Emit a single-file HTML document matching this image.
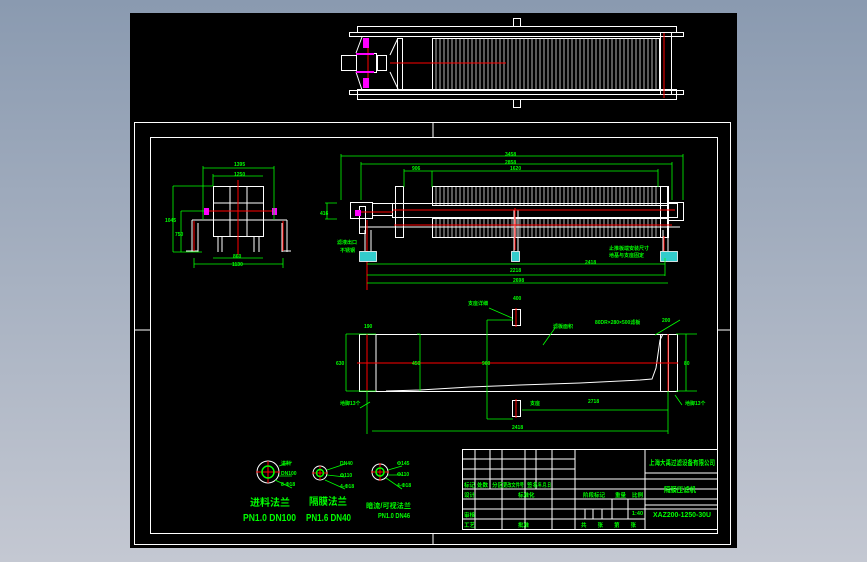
<!DOCTYPE html>
<html><head><meta charset="utf-8"><style>
html,body{margin:0;padding:0;width:867px;height:562px;overflow:hidden;background:linear-gradient(#8a9ab0,#c4c8d2);}
svg{position:absolute;left:0;top:0}
text{font-family:"Liberation Sans","Noto Sans CJK SC",sans-serif;fill:#00ff00;font-weight:bold}
</style></head><body>
<svg width="867" height="562" viewBox="0 0 867 562">
<rect x="130" y="13" width="607" height="535" fill="#000"/>
<g fill="none" stroke="#fff" stroke-width="1">
<rect x="134.5" y="122.5" width="596" height="422"/>
<rect x="150.5" y="137.5" width="567" height="396"/>
<line x1="433" y1="122" x2="433" y2="137"/><line x1="433" y1="533" x2="433" y2="545"/>
<line x1="134" y1="330" x2="150" y2="330"/><line x1="717" y1="330" x2="731" y2="330"/>
<rect x="357.5" y="26.5" width="319" height="6"/><rect x="357.5" y="89.5" width="319" height="10"/>
<rect x="349.5" y="32.5" width="334" height="4"/><rect x="349.5" y="90.5" width="334" height="4"/>
<rect x="432.5" y="38.5" width="227" height="51"/>
<rect x="397.5" y="38.5" width="5" height="51"/>
<rect x="660.5" y="32.5" width="11" height="62"/>
<rect x="341.5" y="55.5" width="15" height="15"/><rect x="356.5" y="53.5" width="20" height="19"/>
<rect x="377.5" y="55.5" width="9" height="15"/>
<path d="M362 37 L356 53 M362 90 L356 72 M398 38 L390 55 M398 89 L390 72"/>
<rect x="513.5" y="18.5" width="7" height="8"/><rect x="513.5" y="99.5" width="7" height="8"/>
<rect x="432.5" y="186.5" width="236" height="19"/><rect x="432.5" y="218.5" width="236" height="19"/>
<rect x="395.5" y="186.5" width="8" height="51"/>
<rect x="392.5" y="203.5" width="285" height="14"/>
<rect x="350.5" y="202.5" width="22" height="16"/><rect x="372.5" y="203.5" width="20" height="12"/>
<rect x="359.5" y="206.5" width="6" height="27"/>
<rect x="660.5" y="186.5" width="7" height="51"/><rect x="668.5" y="202.5" width="15" height="18"/>
<line x1="360" y1="227" x2="680" y2="227"/>
<line x1="365" y1="230" x2="365" y2="251"/><line x1="371" y1="230" x2="371" y2="251"/>
<line x1="514" y1="210" x2="514" y2="251"/><line x1="518" y1="210" x2="518" y2="251"/>
<line x1="663" y1="230" x2="663" y2="251"/><line x1="668" y1="230" x2="668" y2="251"/>
<rect x="213.5" y="186.5" width="50" height="50"/>
<line x1="213" y1="203" x2="263" y2="203"/><line x1="213" y1="220" x2="263" y2="220"/>
<line x1="230" y1="186" x2="230" y2="236"/><line x1="247" y1="186" x2="247" y2="236"/>
<path d="M192 220 L287 220 M192 220 L192 252 M198 223 L198 252 M282 223 L282 252 M287 220 L287 252 M186 251 L198 251 M282 251 L291 251"/>
<path d="M218 236 L218 252 M222 236 L222 252 M254 236 L254 252 M259 236 L259 252"/>
<rect x="359.5" y="334.5" width="318" height="57"/>
<line x1="376" y1="334" x2="376" y2="391"/>
<path d="M386 391 L420 390 L470 387 L520 385 L580 383 L640 380 L652 379 L656 368 L660 340 L663 334"/>
<rect x="660.5" y="334.5" width="8" height="57"/>
<rect x="512.5" y="309.5" width="8" height="16"/><rect x="512.5" y="400.5" width="8" height="16"/>
<circle cx="268" cy="472" r="11"/><circle cx="320" cy="473" r="7"/><circle cx="380" cy="472" r="8"/>
<rect x="462.5" y="449.5" width="255" height="80"/>
<path d="M462 459 L575 459 M462 469 L575 469 M462 479 L717 479 M462 489 L717 489 M462 499 L717 499 M462 509 L717 509 M462 519 L575 519"/>
<path d="M575 449 L575 529 M645 449 L645 529 M645 473 L717 473 M645 505 L717 505"/>
<path d="M475 449 L475 529 M490 449 L490 489 M502 449 L502 529 M525 449 L525 529 M536 449 L536 489 M552 449 L552 529"/>
<path d="M612 499 L612 519 M628 499 L628 519 M575 519 L645 519 M585 509 L585 519 M593 509 L593 519 M602 509 L602 519"/>
</g>
<g stroke="#fff" stroke-width="0.7">
<path d="M436 39V89M440 39V89M444 39V89M448 39V89M452 39V89M456 39V89M460 39V89M464 39V89M468 39V89M472 39V89M476 39V89M480 39V89M484 39V89M488 39V89M492 39V89M496 39V89M500 39V89M504 39V89M508 39V89M512 39V89M516 39V89M520 39V89M524 39V89M528 39V89M532 39V89M536 39V89M540 39V89M544 39V89M548 39V89M552 39V89M556 39V89M560 39V89M564 39V89M568 39V89M572 39V89M576 39V89M580 39V89M584 39V89M588 39V89M592 39V89M596 39V89M600 39V89M604 39V89M608 39V89M612 39V89M616 39V89M620 39V89M624 39V89M628 39V89M632 39V89M636 39V89M640 39V89M644 39V89M648 39V89M652 39V89M656 39V89"/>
<path d="M436 187V205M440 187V205M444 187V205M448 187V205M452 187V205M456 187V205M460 187V205M464 187V205M468 187V205M472 187V205M476 187V205M480 187V205M484 187V205M488 187V205M492 187V205M496 187V205M500 187V205M504 187V205M508 187V205M512 187V205M516 187V205M520 187V205M524 187V205M528 187V205M532 187V205M536 187V205M540 187V205M544 187V205M548 187V205M552 187V205M556 187V205M560 187V205M564 187V205M568 187V205M572 187V205M576 187V205M580 187V205M584 187V205M588 187V205M592 187V205M596 187V205M600 187V205M604 187V205M608 187V205M612 187V205M616 187V205M620 187V205M624 187V205M628 187V205M632 187V205M636 187V205M640 187V205M644 187V205M648 187V205M652 187V205M656 187V205"/>
<path d="M436 219V237M440 219V237M444 219V237M448 219V237M452 219V237M456 219V237M460 219V237M464 219V237M468 219V237M472 219V237M476 219V237M480 219V237M484 219V237M488 219V237M492 219V237M496 219V237M500 219V237M504 219V237M508 219V237M512 219V237M516 219V237M520 219V237M524 219V237M528 219V237M532 219V237M536 219V237M540 219V237M544 219V237M548 219V237M552 219V237M556 219V237M560 219V237M564 219V237M568 219V237M572 219V237M576 219V237M580 219V237M584 219V237M588 219V237M592 219V237M596 219V237M600 219V237M604 219V237M608 219V237M612 219V237M616 219V237M620 219V237M624 219V237M628 219V237M632 219V237M636 219V237M640 219V237M644 219V237M648 219V237M652 219V237M656 219V237"/>
</g>
<g stroke="#f00" stroke-width="1">
<line x1="390" y1="63" x2="506" y2="63"/><line x1="664" y1="33" x2="664" y2="98"/><line x1="368" y1="38" x2="368" y2="88"/>
<line x1="393" y1="210" x2="675" y2="210"/><line x1="360" y1="212" x2="393" y2="212"/>
<line x1="394" y1="225" x2="672" y2="225"/><line x1="515" y1="208" x2="515" y2="250"/>
<line x1="367" y1="220" x2="367" y2="290"/><line x1="664" y1="236" x2="664" y2="258"/>
<line x1="238" y1="180" x2="238" y2="255"/><line x1="204" y1="211" x2="274" y2="211"/>
<line x1="194" y1="221" x2="194" y2="251"/><line x1="283" y1="221" x2="283" y2="251"/>
<line x1="357" y1="363" x2="678" y2="363"/><line x1="367" y1="334" x2="367" y2="391"/><line x1="668" y1="334" x2="668" y2="391"/>
<line x1="516" y1="308" x2="516" y2="327"/><line x1="516" y1="399" x2="516" y2="418"/>
<line x1="256" y1="472" x2="280" y2="472"/><line x1="268" y1="461" x2="268" y2="483"/>
<line x1="312" y1="473" x2="328" y2="473"/><line x1="320" y1="466" x2="320" y2="480"/><line x1="380" y1="463" x2="380" y2="481"/><line x1="371" y1="472" x2="389" y2="472"/>
</g>
<g stroke="#00ff00" stroke-width="1.5" fill="none"><circle cx="268" cy="472" r="6"/><circle cx="320" cy="473" r="3.5"/><circle cx="380" cy="472" r="4"/></g>
<g fill="#f0f">
<rect x="363" y="38" width="6" height="10"/><rect x="363" y="78" width="6" height="10"/>
<rect x="356" y="53" width="18" height="2"/><rect x="356" y="71" width="18" height="2"/>
<rect x="355" y="210" width="6" height="6"/><rect x="204" y="208" width="5" height="7"/><rect x="272" y="208" width="5" height="7"/>
</g>
<g fill="#3cc" stroke="#fff" stroke-width="0.8">
<rect x="359.5" y="251.5" width="17" height="10"/><rect x="511.5" y="251.5" width="8" height="10"/><rect x="660.5" y="251.5" width="17" height="10"/>
</g>
<g stroke="#00ff00" stroke-width="0.8" fill="none">
<path d="M341 156H683M341 154V200M683 154V200M361 164H672M361 162V200M672 162V200M404 171H658M404 169V187M658 169V187M432 171V187"/>
<path d="M327 203V219M325 203H337M325 219H337"/>
<path d="M367 264H665M367 275H665M367 283H668M665 258V276"/>
<path d="M203 168H274M203 166V220M274 166V220M213 176H263M213 174V186M213 258H263M194 264H283M194 258V268M283 258V268"/>
<path d="M173 186H213M173 186V252M181 211H204M181 211V252M173 252H202"/>
<path d="M346 334H376M346 334V391M346 391H376M417 334H420M420 334V391M487 320V419M487 320H513M487 419H513M522 410H668M372 431H668M367 391V434M668 391V434M676 334H697M686 334V391M676 391H697"/>
<path d="M655 335L680 320M489 308L512 318M543 345L555 328M370 402L360 408M675 395L682 405"/>
<path d="M279 466L292 462M279 476L292 476M275 480L292 488M327 470L345 464M327 475L345 477M325 480L345 489M388 470L402 466M388 475L402 475M386 478L402 489"/>
</g>
<g font-size="5">
<text x="505" y="156">3458</text><text x="505" y="164">2858</text><text x="412" y="170">906</text><text x="510" y="170">1620</text>
<text x="320" y="215">416</text><text x="337" y="244">滤液出口</text><text x="340" y="252">不锈钢</text>
<text x="609" y="250">止推板端安装尺寸</text><text x="609" y="257">地基与支座固定</text>
<text x="585" y="264">2418</text><text x="510" y="272">2218</text><text x="513" y="282">2698</text>
<text x="234" y="166">1395</text><text x="234" y="176">1250</text><text x="233" y="258">860</text><text x="232" y="266">1130</text>
<text x="165" y="222">1045</text><text x="175" y="236">750</text>
<text x="364" y="328">190</text><text x="336" y="365">630</text><text x="412" y="365">450</text><text x="482" y="365">960</text>
<text x="468" y="305">支座详细</text><text x="513" y="300">400</text><text x="553" y="328">滤板面积</text>
<text x="595" y="324">80DR×280×500滤板</text><text x="662" y="322">200</text><text x="684" y="365">80</text>
<text x="340" y="405">地脚13个</text><text x="685" y="405">地脚13个</text><text x="530" y="405">支座</text>
<text x="588" y="403">2718</text><text x="512" y="429">2418</text>
<text x="281" y="465">进料</text><text x="281" y="475">DN100</text><text x="281" y="486">8-Φ18</text>
<text x="340" y="465">DN40</text><text x="340" y="477">Φ110</text><text x="340" y="488">4-Φ18</text>
<text x="397" y="465">Φ145</text><text x="397" y="476">Φ110</text><text x="397" y="487">4-Φ18</text>
</g>
<g font-size="10">
<text x="250" y="506" textLength="40" lengthAdjust="spacingAndGlyphs">进料法兰</text>
<text x="243" y="521" textLength="53" lengthAdjust="spacingAndGlyphs">PN1.0 DN100</text>
<text x="309" y="505" textLength="38" lengthAdjust="spacingAndGlyphs">隔膜法兰</text>
<text x="306" y="521" textLength="45" lengthAdjust="spacingAndGlyphs">PN1.6 DN40</text>
</g>
<g font-size="7"><text x="366" y="508" textLength="45" lengthAdjust="spacingAndGlyphs">暗流/可视法兰</text><text x="378" y="518" textLength="32" lengthAdjust="spacingAndGlyphs">PN1.0 DN46</text></g>
<g font-size="5.5">
<text x="464" y="487">标记</text><text x="477" y="487">处数</text><text x="492" y="487">分区</text><text x="503" y="487" textLength="21" lengthAdjust="spacingAndGlyphs">更改文件号</text><text x="527" y="487">签名</text><text x="538" y="487" textLength="13" lengthAdjust="spacingAndGlyphs">年.月.日</text>
<text x="464" y="497">设计</text><text x="518" y="497">标准化</text><text x="464" y="517">审核</text><text x="464" y="527">工艺</text><text x="518" y="527">批准</text>
<text x="583" y="497">阶段标记</text><text x="615" y="497">重量</text><text x="632" y="497">比例</text><text x="632" y="515">1:40</text>
<text x="581" y="527">共　　张　　第　　张</text>
</g>
<g font-size="7"><text x="649" y="465" textLength="66" lengthAdjust="spacingAndGlyphs">上海大禹过滤设备有限公司</text><text x="664" y="492" textLength="32" lengthAdjust="spacingAndGlyphs">隔膜压滤机</text><text x="653" y="517" textLength="58" lengthAdjust="spacingAndGlyphs">XAZ200-1250-30U</text></g>
</svg>
</body></html>
